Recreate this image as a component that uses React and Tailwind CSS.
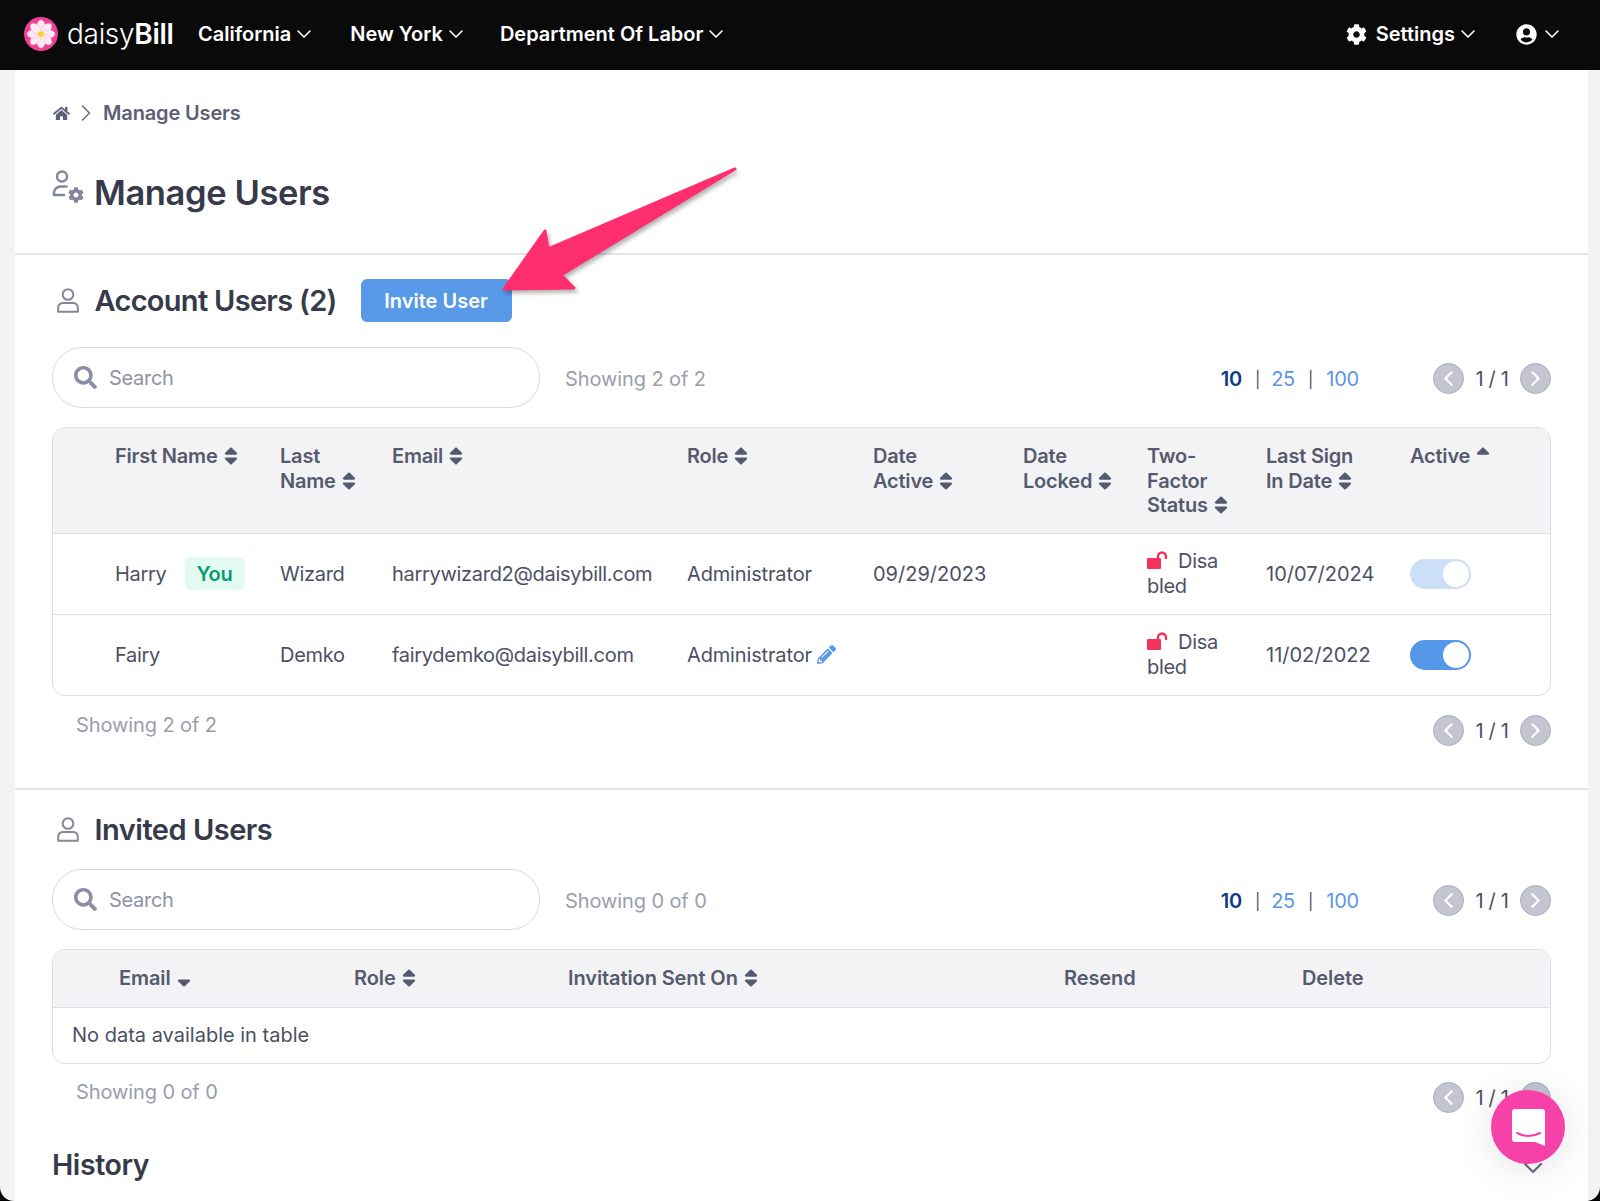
import React from 'react';
import { ChevronDown, ChevronLeft, ChevronRight } from 'lucide-react';
import { FaCog, FaHome, FaPencilAlt, FaSearch, FaSort, FaSortDown, FaSortUp, FaUserCircle } from 'react-icons/fa';

const Logo = () => (
  <svg viewBox="0 0 34 34" className="w-[34px] h-[34px] shrink-0">
    <circle cx="17" cy="17" r="17" fill="#ee3f96" />
    {[0, 45, 90, 135, 180, 225, 270, 315].map((a) => (
      <ellipse key={a} cx="17" cy="9.8" rx="4.2" ry="6.8" fill="#fdeaf2" stroke="#f7a8cc" strokeWidth="0.5" transform={`rotate(${a} 17 17)`} />
    ))}
    <circle cx="17" cy="17" r="2.8" fill="#f8d418" />
  </svg>
);

const NavItem = ({ label, className }) => (
  <div className={`flex items-center text-white font-semibold text-[20px] ${className}`}>
    {label}
    <ChevronDown size={24} strokeWidth={1.6} className="ml-[1px]" />
  </div>
);

const UserCogIcon = () => (
  <svg viewBox="0 0 32 33" className="w-[32px] h-[33px] shrink-0 text-[#84879c]" fill="none" stroke="#84879c" strokeWidth="2.5">
    <circle cx="10" cy="6.5" r="5" />
    <path d="M2 25 v-2 a6.500 6.500 0 0 1 6.500-6.500 h6" strokeLinecap="round" />
    <path d="M2 25 h10" strokeLinecap="round" />
    <FaCog size={16} x={16} y={17} />
  </svg>
);

const UserIcon = () => (
  <svg viewBox="0 0 22 25" className="w-[22px] h-[25px] shrink-0" fill="none" stroke="#84879c" strokeWidth="2">
    <circle cx="11" cy="6.5" r="5.3" />
    <path d="M1.2 23.8 v-4.3 a4.5 4.5 0 0 1 4.5-4.5 h10.6 a4.5 4.5 0 0 1 4.5 4.5 v4.3 z" strokeLinejoin="round" />
  </svg>
);

const SectionTitle = ({ children, className }) => (
  <div className="flex items-center">
    <div className="w-[42.5px] pl-[5px]"><UserIcon /></div>
    <h2 className={`text-[29px] font-semibold text-[#363a4a] ${className}`}>{children}</h2>
  </div>
);

const PagerButton = ({ children }) => (
  <div className="w-[31px] h-[31px] rounded-full bg-[#c3c6d0] border border-[#a9acb9] flex items-center justify-center text-white">
    {children}
  </div>
);

const Pager = () => (
  <div className="flex items-center text-[#4d5064] text-[20px]">
    <PagerButton><ChevronLeft size={25} strokeWidth={2.2} /></PagerButton>
    <span className="w-[56px] text-center">1 / 1</span>
    <PagerButton><ChevronRight size={25} strokeWidth={2.2} /></PagerButton>
  </div>
);

const SearchRow = ({ showing }) => (
  <div className="flex items-center">
    <div className="w-[488px] h-[61px] rounded-[30px] border border-[#d9dae0] flex items-center pl-[21px]">
      <FaSearch size={23} className="text-[#8a8da3] shrink-0" />
      <input
        placeholder="Search"
        className="ml-[12px] w-[400px] outline-none text-[20px] tracking-[-0.3px] placeholder:text-[#8f92a6]"
      />
    </div>
    <span className="ml-[25px] text-[20px] tracking-[-0.1px] text-[#9a9db0] mt-[2px]">{showing}</span>
    <div className="ml-auto flex items-center mt-[2px]">
      <div className="flex items-center text-[20px] tracking-[-0.2px] text-[#5b96e6]">
        <span className="font-semibold text-[#0b3d82]">10</span>
        <span className="ml-[13px] mr-[11px] text-[#4d5064] text-[16px]">|</span>
        <span>25</span>
        <span className="mx-[13px] text-[#4d5064] text-[16px]">|</span>
        <span>100</span>
      </div>
      <div className="ml-[74px]"><Pager /></div>
    </div>
  </div>
);

const Footer = ({ showing, className }) => (
  <div className={`flex items-start justify-between ${className}`}>
    <span className="ml-[24px] -mt-[5px] text-[20px] tracking-[-0.1px] text-[#9a9db0]">{showing}</span>
    <Pager />
  </div>
);

const Th = ({ children, sort = FaSort }) => {
  const Icon = sort;
  return (
    <th className="p-0 pt-[16px] align-top text-left font-semibold">
      {children}
      <Icon size={22} className="inline-block ml-[2px] -mt-[3px] text-[#565a6e]" />
    </th>
  );
};

const UnlockIcon = () => (
  <svg viewBox="0 0 21 18" className="inline-block w-[21px] h-[18px] mr-[10px] align-[-1px]">
    <rect x="0" y="7" width="14" height="11" rx="1" fill="#f5325f" />
    <path d="M11 8 V5.5 a4 4 0 0 1 8 0 V7" fill="none" stroke="#f5325f" strokeWidth="2.4" strokeLinecap="round" />
  </svg>
);

const Toggle = ({ on }) => (
  <div className={`w-[61px] h-[30px] rounded-full flex items-center justify-end pr-[2px] ${on ? 'bg-[#5496e8]' : 'bg-[#cbe0f8]'}`}>
    <div className="w-[26px] h-[26px] rounded-full bg-white" />
  </div>
);

const UserRow = ({ first, badge, last, email, role, edit, active, signIn, on, border }) => (
  <tr className={`h-[81px] ${border ? 'border-b border-[#dedfe6]' : ''}`}>
    <td />
    <td>
      <span className="inline-flex items-center">
        {first}
        {badge && (
          <span className="ml-[18px] w-[60px] h-[33px] rounded-[6px] bg-[#e3faf3] text-[#0b9b6e] font-semibold flex items-center justify-center">
            You
          </span>
        )}
      </span>
    </td>
    <td>{last}</td>
    <td>{email}</td>
    <td className="tracking-[-0.15px]">
      {role}
      {edit && <FaPencilAlt size={19} className="inline-block ml-[5px] -mt-[3px] text-[#5899e8]" />}
    </td>
    <td className="tracking-normal">{active}</td>
    <td />
    <td className="leading-[24.5px]">
      <UnlockIcon />Disa<br />bled
    </td>
    <td className="tracking-normal">{signIn}</td>
    <td><Toggle on={on} /></td>
  </tr>
);

const App = () => {
  return (
    <div className="relative w-[1600px] h-[1201px] bg-black overflow-hidden [font-family:Inter,sans-serif]">
      <header className="h-[70px] bg-[#0a0a0b] flex items-center pb-[2px] pl-[24px] pr-[36px]">
        <Logo />
        <div className="ml-[9px] w-[131px] text-white text-[28px] tracking-[-0.3px]">
          <span className="font-light">daisy</span><span className="font-semibold">Bill</span>
        </div>
        <NavItem label="California" />
        <NavItem label="New York" className="ml-[34px]" />
        <NavItem label="Department Of Labor" className="ml-[32px]" />
        <div className="ml-auto flex items-center text-white">
          <FaCog size={21} className="mr-[9px]" />
          <NavItem label="Settings" />
          <FaUserCircle size={21} className="ml-[36px]" />
          <ChevronDown size={24} strokeWidth={1.6} className="ml-[3px]" />
        </div>
      </header>

      <div className="h-[1131px] bg-[#f3f3f6] rounded-b-[14px] pl-[15px] pr-[12px] overflow-hidden">
        <main className="h-full bg-white text-[20px] tracking-[-0.3px] text-[#4d5064]">
          <section className="h-[185px] border-b-2 border-[#e4e5ea] px-[37px] pt-[31px]">
            <div className="flex items-center h-[24px] text-[#5d6074] font-semibold tracking-[-0.15px]">
              <FaHome size={17} className="ml-[1px] text-[#5d6074]" />
              <ChevronRight size={28} strokeWidth={1.4} className="ml-[2px] mr-[3px] text-[#6d7083]" />
              Manage Users
            </div>
            <div className="flex items-center mt-[30px]">
              <div className="w-[42px]"><UserCogIcon /></div>
              <h1 className="text-[34.5px] font-semibold tracking-[-0.4px] text-[#363a4a] mt-[12px]">Manage Users</h1>
            </div>
          </section>

          <section className="h-[535px] border-b-2 border-[#e4e5ea] px-[37px] pt-[24px]">
            <div className="flex items-center h-[43px]">
              <SectionTitle className="tracking-[-0.7px]">Account Users (2)</SectionTitle>
              <button className="ml-[24px] w-[151px] h-[43px] rounded-[6px] bg-[#5899e8] text-white font-semibold tracking-normal">
                Invite User
              </button>
            </div>
            <div className="mt-[25px]"><SearchRow showing="Showing 2 of 2" /></div>
            <div className="mt-[19px] border border-[#dedfe6] rounded-[13px] overflow-hidden">
              <table className="w-full table-fixed border-collapse">
                <colgroup>
                  <col className="w-[62px]" />
                  <col className="w-[165px]" />
                  <col className="w-[112px]" />
                  <col className="w-[295px]" />
                  <col className="w-[186px]" />
                  <col className="w-[150px]" />
                  <col className="w-[124px]" />
                  <col className="w-[119px]" />
                  <col className="w-[144px]" />
                  <col />
                </colgroup>
                <thead>
                  <tr className="h-[105px] bg-[#f3f3f6] border-b border-[#dedfe6] leading-[24.5px] tracking-[-0.2px] text-[#565a6e]">
                    <th />
                    <Th>First Name</Th>
                    <Th>Last<br />Name</Th>
                    <Th>Email</Th>
                    <Th>Role</Th>
                    <Th>Date<br />Active</Th>
                    <Th>Date<br />Locked</Th>
                    <Th>Two-<br />Factor<br />Status</Th>
                    <Th>Last Sign<br />In Date</Th>
                    <Th sort={FaSortUp}>Active</Th>
                  </tr>
                </thead>
                <tbody>
                  <UserRow first="Harry" badge last="Wizard" email="harrywizard2@daisybill.com" role="Administrator" active="09/29/2023" signIn="10/07/2024" border />
                  <UserRow first="Fairy" last="Demko" email="fairydemko@daisybill.com" role="Administrator" edit signIn="11/02/2022" on />
                </tbody>
              </table>
            </div>
            <Footer showing="Showing 2 of 2" className="mt-[19px]" />
          </section>

          <section className="px-[37px] pt-[18px]">
            <div className="flex items-center h-[43px]">
              <SectionTitle className="tracking-[-0.5px]">Invited Users</SectionTitle>
            </div>
            <div className="mt-[18px]"><SearchRow showing="Showing 0 of 0" /></div>
            <div className="mt-[19px] border border-[#dedfe6] rounded-[13px] overflow-hidden">
              <table className="w-full table-fixed border-collapse">
                <colgroup>
                  <col className="w-[66px]" />
                  <col className="w-[235px]" />
                  <col className="w-[214px]" />
                  <col className="w-[496px]" />
                  <col className="w-[238px]" />
                  <col />
                </colgroup>
                <thead>
                  <tr className="h-[57px] bg-[#f3f3f6] border-b border-[#dedfe6] text-[#565a6e] tracking-[-0.1px] font-semibold text-left">
                    <th />
                    <th className="font-semibold">Email<FaSortDown size={22} className="inline-block ml-[2px] -mt-[3px]" /></th>
                    <th className="font-semibold">Role<FaSort size={22} className="inline-block ml-[2px] -mt-[3px]" /></th>
                    <th className="font-semibold">Invitation Sent On<FaSort size={22} className="inline-block ml-[2px] -mt-[3px]" /></th>
                    <th className="font-semibold">Resend</th>
                    <th className="font-semibold">Delete</th>
                  </tr>
                </thead>
                <tbody>
                  <tr className="h-[56px]">
                    <td colSpan={6} className="pl-[19px] tracking-normal">No data available in table</td>
                  </tr>
                </tbody>
              </table>
            </div>
            <Footer showing="Showing 0 of 0" className="mt-[18px]" />
            <div className="flex items-center justify-between mt-[32px] h-[40px]">
              <h2 className="text-[28.5px] font-semibold tracking-[-0.4px] text-[#363a4a]">History</h2>
              <ChevronDown size={32} strokeWidth={1.8} className="mr-[2px] mt-[6px] text-[#6d7083]" />
            </div>
          </section>
        </main>
      </div>

      {/* annotation arrow over the button */}
      <svg viewBox="0 0 250 140" className="absolute left-[495px] top-[160px] w-[250px] h-[140px] drop-shadow-[2px_3px_2px_rgba(0,0,0,0.3)]">
        <path d="M240 9 L53 89 L50 71 L9 129 L79 128 L66 115 Z" fill="#ff2e6e" stroke="#ff2e6e" strokeWidth="3" strokeLinejoin="round" />
      </svg>

      {/* chat launcher */}
      <div className="absolute left-[1491px] top-[1090px] w-[74px] h-[74px] rounded-full bg-[#f541a8] shadow-[0_4px_40px_rgba(0,0,0,0.12)] flex items-center justify-center">
        <svg viewBox="0 0 33 37" className="w-[33px] h-[37px]">
          <path d="M3 0 H30 a3 3 0 0 1 3 3 V37 L23 33 H3 a3 3 0 0 1-3-3 V3 a3 3 0 0 1 3-3 z" fill="#fff" />
          <path d="M5 24 q11.500 6 23 0" fill="none" stroke="#f541a8" strokeWidth="2" strokeLinecap="round" />
        </svg>
      </div>
    </div>
  );
};

export default App;
